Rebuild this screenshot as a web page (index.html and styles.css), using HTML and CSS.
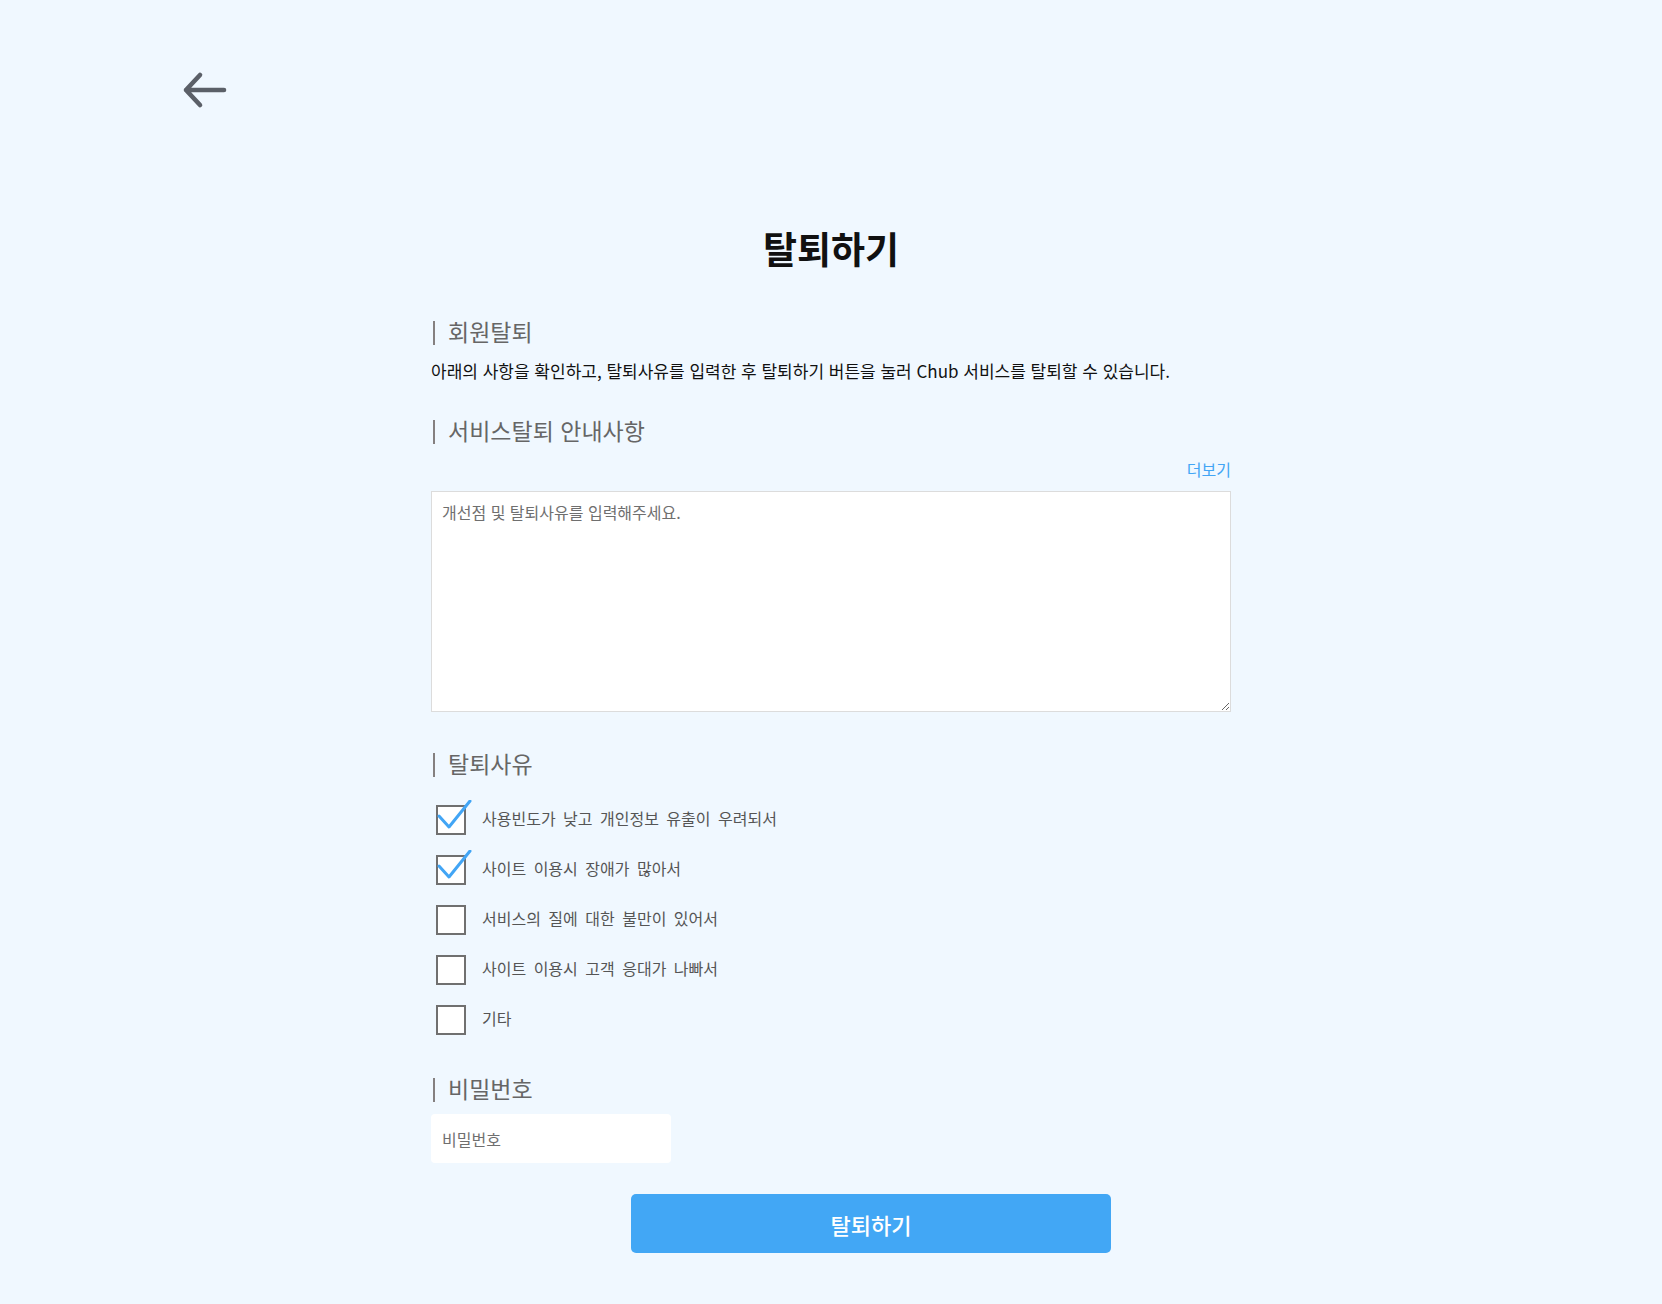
FILE: index.html
```html
<!DOCTYPE html>
<html lang="ko">
<head>
<meta charset="utf-8">
<title>탈퇴하기</title>
<link rel="stylesheet" href="styles.css">
</head>
<body>
<div class="topbar">
  <svg class="back" width="48" height="40" viewBox="0 0 48 40" aria-label="뒤로가기">
    <path d="M44 20H6M20 5L6 20L20 35" fill="none" stroke="#5b6068" stroke-width="4.6" stroke-linecap="round" stroke-linejoin="round"/>
  </svg>
</div>
<main class="page">
  <h1 class="title">탈퇴하기</h1>

  <h2 class="sec sec-first">회원탈퇴</h2>
  <p class="desc">아래의 사항을 확인하고, 탈퇴사유를 입력한 후 탈퇴하기 버튼을 눌러 Chub 서비스를 탈퇴할 수 있습니다.</p>

  <h2 class="sec sec-info">서비스탈퇴 안내사항</h2>
  <div class="more-row"><a class="more">더보기</a></div>
  <textarea class="reason" placeholder="개선점 및 탈퇴사유를 입력해주세요."></textarea>

  <h2 class="sec sec-reason">탈퇴사유</h2>
  <ul class="checks">
    <li class="check"><span class="box on"><svg class="tick" width="40" height="32" viewBox="0 0 40 32"><polyline points="3,16 13,27 34,1" fill="none" stroke="#42a5f5" stroke-width="3" stroke-linecap="round" stroke-linejoin="round"/></svg></span><span class="label">사용빈도가 낮고 개인정보 유출이 우려되서</span></li>
    <li class="check"><span class="box on"><svg class="tick" width="40" height="32" viewBox="0 0 40 32"><polyline points="3,16 13,27 34,1" fill="none" stroke="#42a5f5" stroke-width="3" stroke-linecap="round" stroke-linejoin="round"/></svg></span><span class="label">사이트 이용시 장애가 많아서</span></li>
    <li class="check"><span class="box"></span><span class="label">서비스의 질에 대한 불만이 있어서</span></li>
    <li class="check"><span class="box"></span><span class="label">사이트 이용시 고객 응대가 나빠서</span></li>
    <li class="check"><span class="box"></span><span class="label">기타</span></li>
  </ul>

  <h2 class="sec sec-pw">비밀번호</h2>
  <input class="pw" type="password" placeholder="비밀번호">
  <button class="submit" type="button">탈퇴하기</button>
</main>
</body>
</html>
```

FILE: styles.css
```css
* { box-sizing: border-box; }
html, body { margin: 0; padding: 0; }
body {
  background: #f0f8ff;
  font-family: "Noto Sans CJK KR", "Noto Sans", sans-serif;
  min-height: 1304px;
}
.topbar {
  padding: 70px 0 0 180px;
  height: 110px;
}
.back { display: block; }
.page {
  width: 800px;
  margin: 0 auto;
  padding-bottom: 49px;
}
.title {
  margin: 117px 0 0;
  font-size: 37px;
  line-height: 42px;
  font-weight: 700;
  color: #111;
  text-align: center;
}
.sec {
  display: flex;
  align-items: center;
  margin: 0;
  font-size: 23px;
  line-height: 30px;
  font-weight: 400;
  color: #666;
  padding-left: 2px;
}
.sec::before {
  content: "";
  width: 2px;
  height: 24px;
  background: #858080;
  margin-right: 13px;
  margin-top: 3px;
}
.sec-first { margin-top: 47px; }
.desc {
  margin: 13px 0 0;
  font-size: 17px;
  line-height: 24px;
  color: #111;
}
.sec-info { margin-top: 32px; }
.more-row {
  margin-top: 14px;
  display: flex;
  justify-content: flex-end;
}
.more {
  font-size: 16px;
  line-height: 20px;
  color: #42a5f5;
  cursor: pointer;
}
.reason {
  display: block;
  margin-top: 12px;
  width: 800px;
  height: 221px;
  border: 1px solid #dcdcdc;
  background: #fff;
  padding: 9px 10px;
  font-family: "Noto Sans CJK KR", "Noto Sans", sans-serif;
  font-size: 16px;
  line-height: 22px;
  color: #333;
}
.reason::placeholder { color: #6f6f6f; }
.sec-reason { margin-top: 36px; }
.checks {
  list-style: none;
  margin: 27px 0 0;
  padding: 0 0 0 5px;
  display: flex;
  flex-direction: column;
  gap: 20px;
}
.check {
  display: flex;
  align-items: center;
  height: 30px;
}
.box {
  position: relative;
  width: 30px;
  height: 30px;
  border: 2px solid #707070;
  background: #fff;
  flex: none;
}
.tick {
  position: absolute;
  left: -2px;
  top: -7px;
}
.label {
  margin-left: 16px;
  padding-bottom: 5px;
  font-size: 16px;
  line-height: 24px;
  color: #555;
  word-spacing: 3px;
}
.sec-pw { margin-top: 38px; }
.pw {
  display: block;
  margin-top: 11px;
  width: 240px;
  height: 49px;
  border: none;
  border-radius: 4px;
  background: #fff;
  padding: 0 11px;
  font-family: "Noto Sans CJK KR", "Noto Sans", sans-serif;
  font-size: 16px;
  color: #333;
  outline: none;
}
.pw::placeholder { color: #6f6f6f; }
.submit {
  display: block;
  margin: 31px 0 0 200px;
  width: 480px;
  height: 59px;
  border: none;
  border-radius: 5px;
  background: #42a7f5;
  color: #fff;
  font-family: "Noto Sans CJK KR", "Noto Sans", sans-serif;
  font-size: 22px;
  font-weight: 500;
  cursor: pointer;
}
```
